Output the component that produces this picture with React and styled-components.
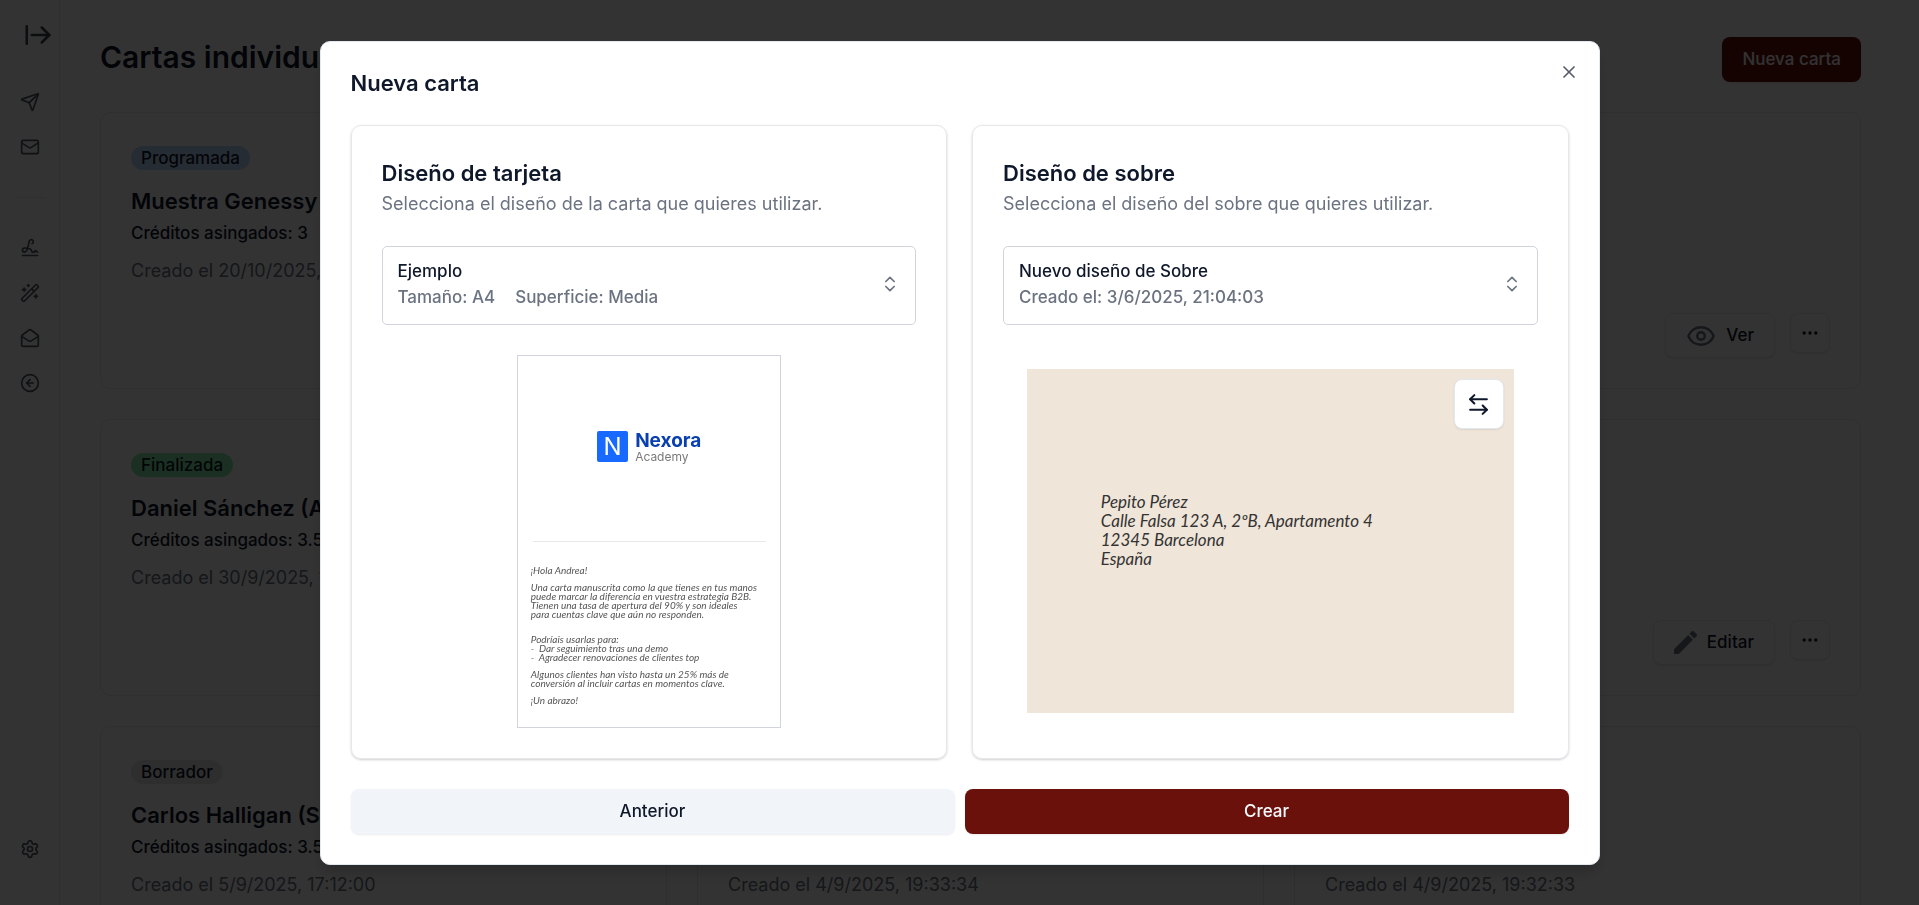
import React from 'react';
import styled, { createGlobalStyle, css } from 'styled-components';
import {
  ArrowRightFromLine,
  Send,
  Mail,
  Signature,
  WandSparkles,
  MailOpen,
  CircleArrowLeft,
  Settings,
  Eye,
  Ellipsis,
  X,
  ChevronsUpDown,
  ArrowLeftRight,
} from 'lucide-react';
import { MdEdit } from 'react-icons/md';

const GlobalStyle = createGlobalStyle`
  *, *::before, *::after { box-sizing: border-box; }
  body {
    margin: 0;
    overflow: hidden;
    background: #ffffff;
    color: #0f172a;
    font-family: Inter, "Liberation Sans", sans-serif;
    font-size: 18px;
    line-height: 25px;
  }
  button, select { font: inherit; color: inherit; }
  h1, h2, h3, p { margin: 0; }
`;

const Shell = styled.div`
  display: flex;
  height: 100vh;
  overflow: hidden;
`;

const Sidebar = styled.aside`
  flex: none;
  width: 60px;
  display: flex;
  flex-direction: column;
  align-items: center;
  padding: 20px 0 36px;
  border-right: 1px solid #e2e8f0;
`;

const ToggleButton = styled.button`
  align-self: flex-end;
  display: flex;
  padding: 0;
  margin: 0 6px 32px 0;
  border: 0;
  background: none;
  color: #374151;
`;

const NavGroup = styled.nav`
  display: flex;
  flex-direction: column;
  gap: 5px;
`;

const NavLink = styled.a`
  display: flex;
  align-items: center;
  justify-content: center;
  width: 40px;
  height: 40px;
  color: #4b5563;
`;

const NavDivider = styled.hr`
  width: 30px;
  height: 1px;
  margin: 30px 0;
  border: 0;
  background: #e2e8f0;
`;

const SidebarFooter = styled.div`
  margin-top: auto;
`;

const Main = styled.main`
  flex: 1;
  min-width: 0;
  padding: 37px 58px 30px 40px;
`;

const PageHeader = styled.header`
  display: flex;
  justify-content: space-between;
  align-items: flex-start;
  margin-bottom: 30px;
`;

const PageTitle = styled.h1`
  font-size: 30px;
  line-height: 40px;
  font-weight: 600;
`;

const variants = {
  primary: css`
    background: #6b110c;
    color: #f8fafc;
  `,
  secondary: css`
    background: #f1f5f9;
    color: #0f172a;
  `,
  outline: css`
    background: #ffffff;
    border: 1px solid #e2e8f0;
  `,
};

const Button = styled.button`
  display: inline-flex;
  align-items: center;
  justify-content: center;
  gap: 10px;
  height: 45px;
  padding: 0 20px;
  border: 0;
  border-radius: 8px;
  font-size: 17px;
  font-weight: 500;
  box-shadow: 0 1px 2px rgba(0, 0, 0, 0.08);
  ${({ $variant }) => variants[$variant]}
  svg { color: #6b7280; }
`;

const SquareButton = styled.button`
  display: flex;
  align-items: center;
  justify-content: center;
  width: ${({ $size }) => $size}px;
  height: ${({ $size }) => $size}px;
  padding: 0;
  border: 1px solid #e2e8f0;
  border-radius: 8px;
  background: #ffffff;
  box-shadow: 0 1px 2px rgba(0, 0, 0, 0.08);
`;

const CardGrid = styled.div`
  display: grid;
  grid-template-columns: repeat(3, minmax(0, 1fr));
  grid-auto-rows: 277px;
  gap: 30px;
`;

const LetterCard = styled.article`
  display: flex;
  flex-direction: column;
  align-items: flex-start;
  padding: 33px 30px 30px;
  border: 1px solid #e2e8f0;
  border-radius: 10px;
`;

const badgeColors = {
  Programada: '#bfdbfe',
  Finalizada: '#86efac',
  Borrador: '#e5e7eb',
};

const Badge = styled.span`
  padding: 0 10px;
  border-radius: 12px;
  font-size: 17px;
  font-weight: 500;
  line-height: 24px;
  background: ${({ $status }) => badgeColors[$status]};
`;

const LetterName = styled.h2`
  margin-top: 15px;
  font-size: 22px;
  line-height: 32px;
  font-weight: 600;
`;

const Credits = styled.p`
  margin-top: 4px;
  font-size: 17px;
  font-weight: 500;
`;

const CreatedAt = styled.p`
  margin-top: 12px;
  font-size: 18px;
  color: #6b7280;
`;

const CardActions = styled.div`
  display: flex;
  align-items: flex-start;
  gap: 15px;
  margin-top: auto;
  align-self: flex-end;
`;

const Overlay = styled.div`
  position: fixed;
  inset: 0;
  display: flex;
  align-items: center;
  justify-content: center;
  background: rgba(0, 0, 0, 0.8);
`;

const Dialog = styled.section`
  position: relative;
  width: 100%;
  max-width: 1280px;
  padding: 30px;
  border: 1px solid #e2e8f0;
  border-radius: 10px;
  background: #ffffff;
  box-shadow: 0 10px 15px -3px rgba(0, 0, 0, 0.2);
`;

const DialogTitle = styled.h2`
  font-size: 22px;
  line-height: 23px;
  font-weight: 600;
  margin-bottom: 30px;
`;

const CloseButton = styled.button`
  position: absolute;
  top: 20px;
  right: 20px;
  display: flex;
  padding: 0;
  border: 0;
  background: none;
  opacity: 0.7;
`;

const PanelRow = styled.div`
  display: grid;
  grid-template-columns: repeat(2, minmax(0, 1fr));
  gap: 25px;
`;

const Panel = styled.section`
  display: flex;
  flex-direction: column;
  padding: 30px;
  border: 1px solid #e5e7eb;
  border-radius: 10px;
  box-shadow: 0 1px 3px rgba(0, 0, 0, 0.1), 0 1px 2px rgba(0, 0, 0, 0.1);
`;

const PanelTitle = styled.h3`
  font-size: 22px;
  line-height: 35px;
  font-weight: 600;
`;

const PanelHint = styled.p`
  color: #6b7280;
  font-size: 18px;
`;

const Picker = styled.label`
  position: relative;
  display: flex;
  align-items: center;
  justify-content: space-between;
  margin: 30px 0;
  padding: 11px 15px 14px;
  border: 1px solid #d1d5db;
  border-radius: 5px;
  font-size: 17px;
  line-height: 26px;
  font-weight: 500;
  svg { color: #6b7280; }
`;

const PickerSelect = styled.select`
  position: absolute;
  inset: 0;
  width: 100%;
  height: 100%;
  opacity: 0;
  cursor: pointer;
`;

const PickerMeta = styled.span`
  display: flex;
  gap: 20px;
  color: #6b7280;
`;

const Preview = styled.div`
  flex: 1;
  display: flex;
  align-items: center;
  justify-content: center;
`;

const Sheet = styled.div`
  display: flex;
  flex-direction: column;
  width: 264px;
  height: 373px;
  padding: 0 14px 0 13px;
  border: 1px solid #d1d5db;
`;

const SheetTop = styled.div`
  display: flex;
  align-items: center;
  justify-content: center;
  gap: 7px;
  height: 186px;
  margin: 0 0 0 2px;
  padding-bottom: 4px;
  border-bottom: 1px solid #e8e8ea;
`;

const LogoMark = styled.span`
  display: flex;
  align-items: center;
  justify-content: center;
  width: 31px;
  height: 31px;
  border-radius: 2px;
  background: #1769ff;
  color: #ffffff;
  font-size: 24px;
  font-weight: 400;
`;

const LogoText = styled.span`
  display: flex;
  flex-direction: column;
  padding-top: 2px;
  color: #7a7a7a;
  font-size: 12px;
  line-height: 13px;
  strong {
    color: #0a3fb0;
    font-size: 19px;
    line-height: 18px;
    font-weight: 700;
  }
`;

const Handwriting = styled.div`
  font-family: Lato, "Liberation Sans", sans-serif;
  font-style: italic;
  white-space: pre;
  font-size: ${({ $size }) => $size}px;
  line-height: ${({ $line }) => $line}px;
  color: ${({ $color }) => $color};
`;

const LetterBody = styled(Handwriting)`
  margin-top: 24px;
  p + p { margin-top: 8px; }
`;

const ListParagraph = styled.p`
  padding-top: 8px;
`;

const Envelope = styled.div`
  position: relative;
  display: flex;
  align-items: center;
  width: 487px;
  height: 344px;
  padding: 0 74px 22px;
  background: #efe5d9;
`;

const FlipSlot = styled.div`
  position: absolute;
  top: 10px;
  right: 10px;
`;

const DialogFooter = styled.footer`
  display: grid;
  grid-template-columns: repeat(2, minmax(0, 1fr));
  gap: 10px;
  margin-top: 30px;
`;

const mainLinks = [
  { icon: Send, label: 'Campañas' },
  { icon: Mail, label: 'Cartas' },
];

const toolLinks = [
  { icon: Signature, label: 'Firmas' },
  { icon: WandSparkles, label: 'Diseños' },
  { icon: MailOpen, label: 'Sobres' },
  { icon: CircleArrowLeft, label: 'Volver' },
];

const letters = [
  { status: 'Programada', name: 'Muestra Genessy', credits: '3', date: '20/10/2025, 10:00:00' },
  { status: 'Programada', name: 'Muestra', credits: '3', date: '20/10/2025' },
  { status: 'Programada', name: 'Muestra', credits: '3', date: '20/10/2025' },
  { status: 'Finalizada', name: 'Daniel Sánchez (A)', credits: '3.5', date: '30/9/2025, 10:00:00' },
  { status: 'Finalizada', name: 'Daniel', credits: '3', date: '30/9/2025' },
  { status: 'Borrador', name: 'Daniel', credits: '3', date: '30/9/2025' },
  { status: 'Borrador', name: 'Carlos Halligan (S)', credits: '3.5', date: '5/9/2025, 17:12:00' },
  { status: 'Borrador', name: 'Carlos', credits: '3', date: '4/9/2025, 19:33:34' },
  { status: 'Borrador', name: 'Carlos', credits: '3', date: '4/9/2025, 19:32:33' },
];

function NavLinks({ links }) {
  return (
    <NavGroup>
      {links.map(({ icon: Icon, label }) => (
        <NavLink key={label} href="#" aria-label={label}>
          <Icon size={20} />
        </NavLink>
      ))}
    </NavGroup>
  );
}

function Letter({ status, name, credits, date }) {
  const draft = status === 'Borrador';
  return (
    <LetterCard>
      <Badge $status={status}>{status}</Badge>
      <LetterName>{name}</LetterName>
      <Credits>Créditos asingados: {credits}</Credits>
      <CreatedAt>Creado el {date}</CreatedAt>
      <CardActions>
        <Button $variant="outline">
          {draft ? <MdEdit size={23} viewBox="3 3 18 18" /> : <Eye size={30} />}
          {draft ? 'Editar' : 'Ver'}
        </Button>
        <SquareButton $size={40} aria-label="Más opciones">
          <Ellipsis size={20} />
        </SquareButton>
      </CardActions>
    </LetterCard>
  );
}

function DesignPicker({ name, meta, label }) {
  return (
    <Picker>
      <span>
        {name}
        <PickerMeta>
          {meta.map((item) => (
            <span key={item}>{item}</span>
          ))}
        </PickerMeta>
      </span>
      <ChevronsUpDown size={20} />
      <PickerSelect aria-label={label}>
        <option>{name}</option>
      </PickerSelect>
    </Picker>
  );
}

export default function App() {
  return (
    <>
      <GlobalStyle />
      <Shell>
        <Sidebar>
          <ToggleButton aria-label="Expandir menú">
            <ArrowRightFromLine size={30} />
          </ToggleButton>
          <NavLinks links={mainLinks} />
          <NavDivider />
          <NavLinks links={toolLinks} />
          <SidebarFooter>
            <NavLink href="#" aria-label="Ajustes">
              <Settings size={20} />
            </NavLink>
          </SidebarFooter>
        </Sidebar>
        <Main>
          <PageHeader>
            <PageTitle>Cartas individuales</PageTitle>
            <Button $variant="primary">Nueva carta</Button>
          </PageHeader>
          <CardGrid>
            {letters.map((letter, i) => (
              <Letter key={i} {...letter} />
            ))}
          </CardGrid>
        </Main>
      </Shell>
      <Overlay>
        <Dialog role="dialog" aria-modal="true" aria-labelledby="dialog-title">
          <DialogTitle id="dialog-title">Nueva carta</DialogTitle>
          <PanelRow>
            <Panel>
              <PanelTitle>Diseño de tarjeta</PanelTitle>
              <PanelHint>Selecciona el diseño de la carta que quieres utilizar.</PanelHint>
              <DesignPicker
                name="Ejemplo"
                meta={['Tamaño: A4', 'Superficie: Media']}
                label="Diseño de tarjeta"
              />
              <Preview>
                <Sheet>
                  <SheetTop>
                    <LogoMark>N</LogoMark>
                    <LogoText>
                      <strong>Nexora</strong>
                      Academy
                    </LogoText>
                  </SheetTop>
                  <LetterBody $size={10} $line={9} $color="#555555">
                    <p>¡Hola Andrea!</p>
                    <p>
                      {'Una carta manuscrita como la que tienes en tus manos\n'}
                      {'puede marcar la diferencia en vuestra estrategia B2B.\n'}
                      {'Tienen una tasa de apertura del 90% y son ideales\n'}
                      {'para cuentas clave que aún no responden.'}
                    </p>
                    <ListParagraph>
                      {'Podríais usarlas para:\n'}
                      {'-  Dar seguimiento tras una demo\n'}
                      {'-  Agradecer renovaciones de clientes top'}
                    </ListParagraph>
                    <p>
                      {'Algunos clientes han visto hasta un 25% más de\n'}
                      {'conversión al incluir cartas en momentos clave.'}
                    </p>
                    <p>¡Un abrazo!</p>
                  </LetterBody>
                </Sheet>
              </Preview>
            </Panel>
            <Panel>
              <PanelTitle>Diseño de sobre</PanelTitle>
              <PanelHint>Selecciona el diseño del sobre que quieres utilizar.</PanelHint>
              <DesignPicker
                name="Nuevo diseño de Sobre"
                meta={['Creado el: 3/6/2025, 21:04:03']}
                label="Diseño de sobre"
              />
              <Preview>
                <Envelope>
                  <Handwriting as="address" $size={17} $line={19} $color="#333333">
                    {'Pepito Pérez\nCalle Falsa 123 A, 2ºB, Apartamento 4\n12345 Barcelona\nEspaña'}
                  </Handwriting>
                  <FlipSlot>
                    <SquareButton $size={50} aria-label="Girar sobre">
                      <ArrowLeftRight size={25} />
                    </SquareButton>
                  </FlipSlot>
                </Envelope>
              </Preview>
            </Panel>
          </PanelRow>
          <DialogFooter>
            <Button $variant="secondary">Anterior</Button>
            <Button $variant="primary">Crear</Button>
          </DialogFooter>
          <CloseButton aria-label="Cerrar">
            <X size={20} />
          </CloseButton>
        </Dialog>
      </Overlay>
    </>
  );
}
